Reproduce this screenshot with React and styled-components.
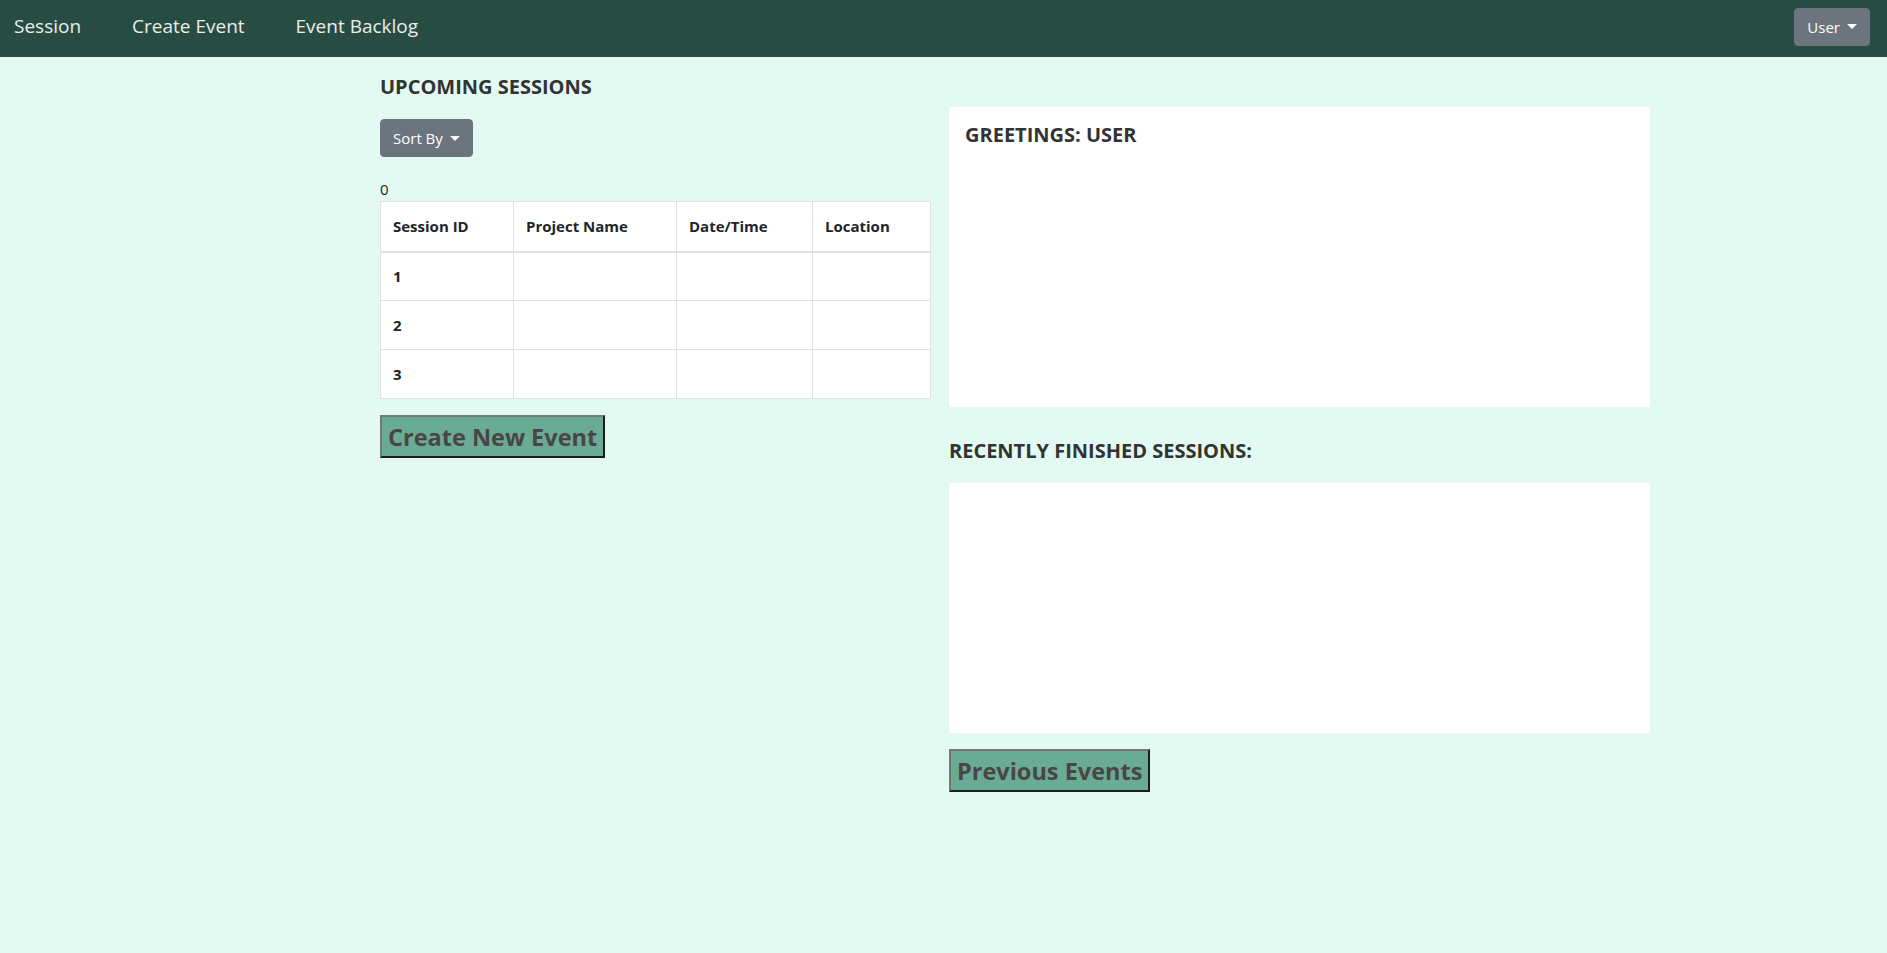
import React from "react";
import styled, { createGlobalStyle } from "styled-components";

const GlobalStyle = createGlobalStyle`
  * {
    box-sizing: border-box;
  }
  body {
    margin: 0;
    background: #e2faf2;
    font-family: "Open Sans", "Noto Sans", sans-serif;
    font-size: 16px;
    line-height: 1.5;
    color: #212529;
  }
`;

const NavBar = styled.nav`
  display: flex;
  align-items: center;
  justify-content: space-between;
  height: 57px;
  padding: 0 17px 4px 14px;
  background: #274d43;
`;

const NavLinks = styled.div`
  display: flex;
  gap: 51px;
`;

const NavLink = styled.a`
  color: #ececec;
  font-size: 19px;
  text-decoration: none;
  cursor: pointer;
`;

const DropdownBtn = styled.button`
  display: inline-flex;
  align-items: center;
  height: 38px;
  padding: 0 12px;
  background: #6c757d;
  border: 1px solid #6c757d;
  border-radius: 4px;
  color: #fff;
  font-family: inherit;
  font-size: 15px;
  cursor: pointer;

  &::after {
    content: "";
    margin-left: 7px;
    border-top: 5px solid #fff;
    border-left: 5px solid transparent;
    border-right: 5px solid transparent;
  }
`;

const Main = styled.main`
  display: grid;
  grid-template-columns: 550px 701px;
  column-gap: 19px;
  align-items: start;
  padding: 18px 0 0 380px;
`;

const Column = styled.section`
  display: flex;
  flex-direction: column;
  align-items: flex-start;
  padding-top: ${(p) => p.$offset || 0}px;
`;

const Heading = styled.h5`
  margin: ${(p) => p.$margin || "0"};
  font-size: 20px;
  font-weight: 700;
  line-height: 24px;
  color: #333;
`;

const Count = styled.div`
  margin-top: 20px;
  font-size: 15px;
  line-height: 24px;
`;

const Table = styled.table`
  width: 100%;
  margin-bottom: 16px;
  border-collapse: collapse;
  background: #fff;
  table-layout: fixed;
`;

const Cell = styled.th`
  width: ${(p) => p.$width || "auto"};
  height: ${(p) => (p.$head ? 50 : 49)}px;
  padding: 0 12px;
  border: 1px solid #dee2e6;
  border-bottom-width: ${(p) => (p.$head ? 2 : 1)}px;
  text-align: left;
  vertical-align: middle;
  font-size: 15px;
  font-weight: 700;
`;

const ActionBtn = styled.button`
  height: 43px;
  margin-top: ${(p) => p.$gap || 0}px;
  padding: 0 6px;
  background: #6aab96;
  border: 2px solid;
  border-color: #767676 #1c1c1c #1c1c1c #767676;
  color: #4a4646;
  font-family: inherit;
  font-size: 23.5px;
  font-weight: 700;
  cursor: pointer;
`;

const Panel = styled.div`
  width: 100%;
  height: ${(p) => p.$height}px;
  padding: 16px;
  background: #fff;
`;

const columns = [
  { label: "Session ID", width: "133px" },
  { label: "Project Name", width: "163px" },
  { label: "Date/Time", width: "136px" },
  { label: "Location", width: "118px" },
];

const sessions = [1, 2, 3];

function App() {
  return (
    <>
      <GlobalStyle />
      <NavBar>
        <NavLinks>
          <NavLink>Session</NavLink>
          <NavLink>Create Event</NavLink>
          <NavLink>Event Backlog</NavLink>
        </NavLinks>
        <DropdownBtn>User</DropdownBtn>
      </NavBar>
      <Main>
        <Column>
          <Heading $margin="0 0 20px">UPCOMING SESSIONS</Heading>
          <DropdownBtn>Sort By</DropdownBtn>
          <Count>0</Count>
          <Table>
            <thead>
              <tr>
                {columns.map((c) => (
                  <Cell key={c.label} $head $width={c.width}>
                    {c.label}
                  </Cell>
                ))}
              </tr>
            </thead>
            <tbody>
              {sessions.map((id) => (
                <tr key={id}>
                  <Cell>{id}</Cell>
                  <Cell as="td" />
                  <Cell as="td" />
                  <Cell as="td" />
                </tr>
              ))}
            </tbody>
          </Table>
          <ActionBtn>Create New Event</ActionBtn>
        </Column>
        <Column $offset={32}>
          <Panel $height={300}>
            <Heading>GREETINGS: USER</Heading>
          </Panel>
          <Heading $margin="32px 0 20px">RECENTLY FINISHED SESSIONS:</Heading>
          <Panel $height={250} />
          <ActionBtn $gap={16}>Previous Events</ActionBtn>
        </Column>
      </Main>
    </>
  );
}

export default App;
